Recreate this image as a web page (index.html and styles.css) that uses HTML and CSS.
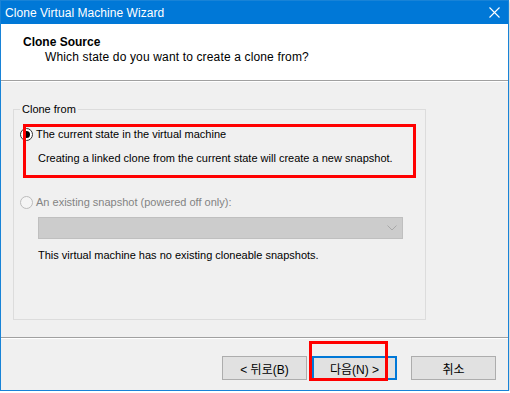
FILE: index.html
```html
<!DOCTYPE html>
<html lang="ko">

<head>
    <meta charset="UTF-8">
    <meta name="viewport" content="width=device-width, initial-scale=1.0">
    <title>Clone Virtual Machine Wizard</title>
    <link rel="stylesheet" href="styles.css">
</head>

<body>
    <div class="window">
        <div class="titlebar">
            <span class="title">Clone Virtual Machine Wizard</span>
            <svg class="close" width="11" height="11" viewBox="0 0 11 11">
                <path d="M0.5 0.5 L10.5 10.5 M10.5 0.5 L0.5 10.5" stroke="#fff" stroke-width="1.1" fill="none" />
            </svg>
        </div>

        <div class="header">
            <div class="head-title">Clone Source</div>
            <div class="head-sub">Which state do you want to create a clone from?</div>
        </div>

        <div class="content">
            <fieldset class="group">
                <legend>Clone from</legend>

                <div class="option marked">
                    <div class="radio-row">
                        <span class="radio checked"></span>
                        <span>The current state in the virtual machine</span>
                    </div>
                    <div class="desc">Creating a linked clone from the current state will create a new snapshot.</div>
                    <span class="redbox"></span>
                </div>

                <div class="option">
                    <div class="radio-row disabled">
                        <span class="radio"></span>
                        <span>An existing snapshot (powered off only):</span>
                    </div>
                    <div class="combo">
                        <svg width="10" height="6" viewBox="0 0 10 6">
                            <polyline points="0.5,0.5 5,5 9.5,0.5" stroke="#a8a8a8" fill="none" />
                        </svg>
                    </div>
                    <div class="note">This virtual machine has no existing cloneable snapshots.</div>
                </div>
            </fieldset>
        </div>

        <div class="footer">
            <button class="btn back">&lt; 뒤로(B)</button>
            <div class="next-wrap">
                <button class="btn next">다음(N) &gt;</button>
                <span class="redbox"></span>
            </div>
            <button class="btn cancel">취소</button>
        </div>
    </div>
</body>

</html>
```

FILE: styles.css
```css
body {
    margin: 0;
    background: #fff;
    font-family: "Liberation Sans", "Noto Sans CJK KR", sans-serif;
    font-size: 11px;
    color: #000;
}

.window {
    width: 509px;
    height: 391px;
    box-sizing: border-box;
    border: 1px solid #1883d7;
    background: #f0f0f0;
    display: flex;
    flex-direction: column;
    box-shadow: 0 1px 3px rgba(0, 0, 0, 0.35);
}

.titlebar {
    height: 23px;
    background: #0078d7;
    color: #fff;
    display: flex;
    align-items: center;
    justify-content: space-between;
    padding: 0 4px 0 4px;
}

.title {
    font-size: 12px;
    letter-spacing: 0.05px;
}

.close {
    margin-right: 4px;
}

.header {
    height: 57px;
    box-sizing: border-box;
    background: #fff;
    padding: 11px 0 0 22px;
    font-size: 12px;
    line-height: 15px;
    border-bottom: 1px solid #a0a0a0;
    box-shadow: 0 1px 0 #fff;
}

.head-title {
    font-weight: bold;
}

.head-sub {
    padding-left: 22px;
    letter-spacing: 0.15px;
}

.content {
    flex: 1;
    padding: 21px 0 0 12px;
}

.group {
    width: 413px;
    box-sizing: border-box;
    margin: 0;
    padding: 9px 0 0 6px;
    height: 218px;
    border: 1px solid #dcdcdc;
}

.group legend {
    padding: 0 2px;
    line-height: 15px;
}

.option {
    position: relative;
}

.radio-row {
    display: flex;
    align-items: center;
    gap: 3px;
    height: 16px;
}

.radio {
    width: 11px;
    height: 11px;
    border: 1px solid #333;
    border-radius: 50%;
    background: #fff;
    position: relative;
    flex: none;
}

.radio.checked::after {
    content: "";
    position: absolute;
    left: 2px;
    top: 2px;
    width: 7px;
    height: 7px;
    border-radius: 50%;
    background: #000;
}

.disabled {
    color: #838383;
}

.disabled .radio {
    border-color: #bcbcbc;
    background: #f4f4f4;
}

.desc {
    margin: 9px 0 0 18px;
    line-height: 15px;
}

.redbox {
    position: absolute;
    border: 3px solid #f00;
    pointer-events: none;
}

.marked .redbox {
    left: 3px;
    top: -2px;
    width: 387px;
    height: 48px;
}

.option + .option {
    margin-top: 28px;
}

.combo {
    margin: 7px 0 0 18px;
    width: 365px;
    height: 22px;
    box-sizing: border-box;
    background: #cccccc;
    border: 1px solid #bfbfbf;
    display: flex;
    align-items: center;
    justify-content: flex-end;
    padding-right: 5px;
}

.note {
    margin: 9px 0 0 18px;
    line-height: 15px;
}

.footer {
    height: 53px;
    box-sizing: border-box;
    border-top: 1px solid #a0a0a0;
    box-shadow: inset 0 1px 0 #fff;
    display: flex;
    align-items: flex-start;
    justify-content: flex-end;
    padding: 18px 12px 0 0;
}

.btn {
    width: 85px;
    height: 24px;
    box-sizing: border-box;
    background: #e1e1e1;
    border: 1px solid #adadad;
    font-family: "Liberation Sans", "Noto Sans CJK KR", sans-serif;
    font-size: 12px;
    padding: 0;
    color: #000;
}

.next-wrap {
    position: relative;
    margin-left: 5px;
    margin-right: 14px;
}

.btn.next {
    border: 2px solid #0078d7;
}

.next-wrap .redbox {
    left: -3px;
    top: -15px;
    width: 73px;
    height: 34px;
}
```
